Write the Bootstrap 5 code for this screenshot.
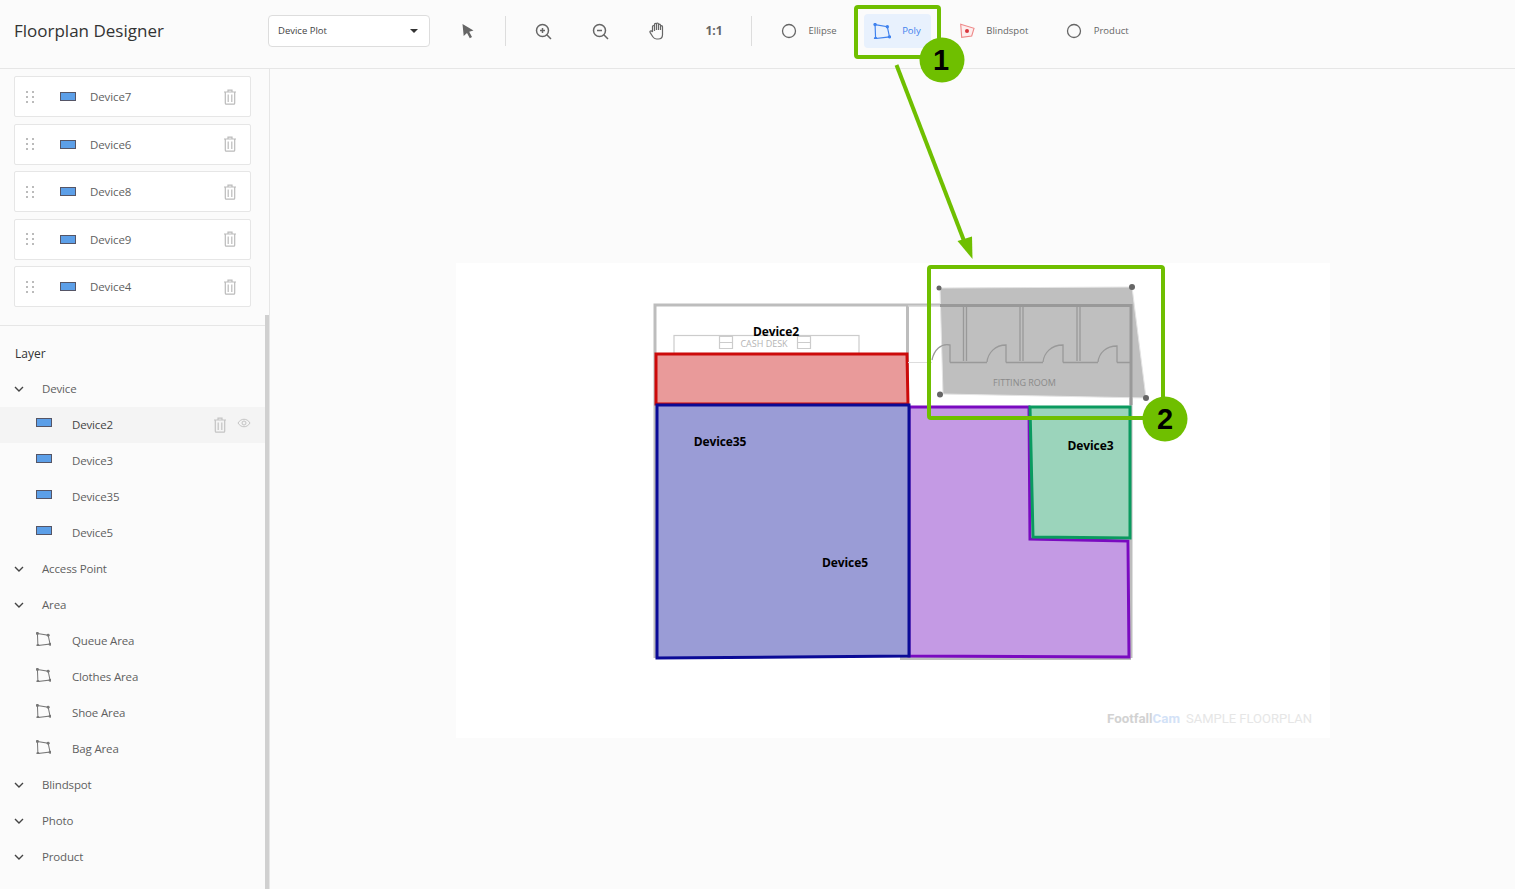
<!DOCTYPE html>
<html lang="en">
<head>
  <meta charset="UTF-8">
  <meta name="viewport" content="width=device-width, initial-scale=1">
  <title>Floorplan Designer</title>
  <link rel="stylesheet" href="https://cdn.jsdelivr.net/npm/bootstrap@5.3.0/dist/css/bootstrap.min.css">
  <script src="https://cdn.jsdelivr.net/npm/bootstrap@5.3.0/dist/js/bootstrap.bundle.min.js"></script>
  <style>
    body {
      background-color: #fbfbfb;
      font-family: "Open Sans", "Noto Sans", sans-serif;
      color: #5f5f5f;
      font-size: 11.5px;
      height: 889px;
    }
    .top-bar { height: 69px; padding-bottom: 6px; border-bottom: 1px solid #e6e6e6; }
    .app-title { width: 268px; padding-left: 14px; font-size: 17px; color: #333; white-space: nowrap; }
    .plot-select {
      width: 162px; height: 32px; font-size: 9.5px; color: #444; background: #fff;
      border: 1px solid #ddd; border-radius: 4px; padding: 0 11px 0 9px;
    }
    .plot-select::after { border-top: 4px solid #333; border-left: 4px solid transparent; border-right: 4px solid transparent; border-bottom: 0; margin: 0; }
    .tool-btn { width: 57px; height: 34px; font-weight: 700; font-size: 12px; color: #666; }
    .tool-first { margin-left: 9px; }
    .tool-sep { width: 1px; height: 30px; background: #ddd; margin: 0 9px 0 8.500px; }
    .tool-sep.is-last { margin: 0 0 0 8.500px; }
    .shape-group { gap: 17px; margin-left: 18px; }
    .shape-btn { height: 34px; padding: 0 10px; gap: 10.5px; font-size: 9.5px; border-radius: 4px; color: #666; }
    .shape-btn.is-active { background: #e8f1fd; color: #3f82ee; }
    .shape-btn.is-active svg { margin: 0 1px 0 -1px; }
    .side-panel { width: 270px; padding-top: 7.49px; border-right: 1px solid #e6e6e6; }
    .device-card {
      height: 41px; margin: 0 0 6.5px 14px; width: 237px; border: 1px solid #e6e6e6; border-radius: 2px;
      background: #fff; font-size: 11.5px; color: #5f5f5f; letter-spacing: -.1px;
    }
    .device-card .drag-dots { margin-left: 11px; }
    .device-card .dev-icon { margin-left: 26px; }
    .device-card .dev-name { margin-left: 14px; }
    .device-card .bin-icon { margin-right: 13px; }
    .panel-rule { border-top: 1px solid #e6e6e6; margin-top: 17.51px; }
    .layer-head { height: 36px; margin-top: 9px; padding: 2px 0 0 15px; color: #333; font-size: 12px; }
    .tree-row { height: 36px; width: 265px; font-size: 11.5px; letter-spacing: -.15px; }
    .tree-group { padding-left: 14px; }
    .tree-group span { margin-left: 18px; }
    .tree-item { padding-left: 36px; }
    .tree-item span { margin-left: 20px; }
    .tree-item.is-poly span { margin-left: 21px; }
    .tree-item.is-selected { background: #f4f4f4; color: #444; }
    .scroll-thumb { position: absolute; left: 265px; top: 315px; width: 4px; height: 574px; background: #d0d0d0; }
    .canvas-area { padding-top: 194px; }
    .plan-sheet { display: block; background: #fff; }
    .plan-label { font-family: "Open Sans", sans-serif; font-size: 12px; font-weight: 700; fill: #000; text-anchor: middle; letter-spacing: -.1px; }
    .plan-small { font-family: "Open Sans", sans-serif; font-size: 9px; fill: #b4b4b4; text-anchor: middle; }
    .note-layer { position: absolute; left: 0; top: 0; pointer-events: none; }
    .note-num { font-family: "Liberation Sans", sans-serif; font-size: 29px; font-weight: 700; fill: #000; text-anchor: middle; }
  </style>
</head>
<body class="position-relative overflow-hidden">
  <svg width="0" height="0" class="position-absolute">
    <symbol id="ic-trash" viewBox="0 0 14 16"><path d="M1 3h12M5 3V1.2h4V3M2.3 3v11.3c0 .5.4.9.9.9h7.6c.5 0 .9-.4.9-.9V3M5.2 5.5v7.5M8.8 5.5v7.5" fill="none" stroke="currentColor" stroke-width="1.2"/></symbol>
    <symbol id="ic-dots" viewBox="0 0 8 12"><g fill="#bbb"><rect x="0" y="0" width="2" height="2"/><rect x="6" y="0" width="2" height="2"/><rect x="0" y="5" width="2" height="2"/><rect x="6" y="5" width="2" height="2"/><rect x="0" y="10" width="2" height="2"/><rect x="6" y="10" width="2" height="2"/></g></symbol>
    <symbol id="ic-device" viewBox="0 0 16 9"><rect x=".5" y=".5" width="15" height="8" fill="#5c9fe8" stroke="#556"/></symbol>
    <symbol id="ic-chev" viewBox="0 0 10 6"><path d="M1 1l4 4 4-4" fill="none" stroke="#444" stroke-width="1.4"/></symbol>
    <symbol id="ic-poly" viewBox="0 0 16 15"><path d="M1.500 1.500L13 3.500L15 13L2 14.500z" fill="none" stroke="currentColor" stroke-width="1.100"/><g fill="currentColor"><circle cx="1.500" cy="1.500" r="1.600"/><circle cx="13" cy="3.500" r="1.600"/><circle cx="15" cy="13" r="1.600"/><circle cx="2" cy="14.500" r="1.600"/></g></symbol>
  </svg>

  <header class="top-bar d-flex align-items-center">
    <div class="app-title">Floorplan Designer</div>
    <button type="button" class="plot-select dropdown-toggle d-flex align-items-center justify-content-between">Device Plot</button>
    <div class="tool-btn tool-first d-flex align-items-center justify-content-center">
      <svg width="14" height="17" viewBox="0 0 14 17"><path d="M1.500 1l11 6.500-4.300 1.300 2.800 5.200-2.200 1.200-2.800-5.300-3.300 3z" fill="#666"/></svg>
    </div>
    <div class="tool-sep"></div>
    <div class="tool-btn d-flex align-items-center justify-content-center">
      <svg width="17" height="17" viewBox="0 0 17 17" fill="none" stroke="#666" stroke-width="1.500"><circle cx="7.500" cy="7.500" r="6"/><path d="M11.800 11.800L16 16M7.500 5v5M5 7.500h5"/></svg>
    </div>
    <div class="tool-btn d-flex align-items-center justify-content-center">
      <svg width="17" height="17" viewBox="0 0 17 17" fill="none" stroke="#666" stroke-width="1.500"><circle cx="7.500" cy="7.500" r="6"/><path d="M11.800 11.800L16 16M5 7.500h5"/></svg>
    </div>
    <div class="tool-btn d-flex align-items-center justify-content-center">
      <svg width="16" height="18" viewBox="0 0 16 18" fill="none" stroke="#666" stroke-width="1.200"><path d="M3.500 10V4.500a1 1 0 0 1 2 0V9M5.500 8V2.300a1 1 0 0 1 2 0V8M7.500 8V2a1 1 0 0 1 2 0v6M9.500 8V3.200a1 1 0 0 1 2 0V8M11.500 8V4.700a1 1 0 0 1 2 0v8c0 2.500-1.800 4.300-4.300 4.300H7.500c-1.800 0-2.800-.8-3.700-2.200L1.200 10.600c-.8-1.300.9-2.400 1.800-1.200l.5.6"/></svg>
    </div>
    <div class="tool-btn d-flex align-items-center justify-content-center">1:1</div>
    <div class="tool-sep is-last"></div>
    <div class="shape-group d-flex align-items-center flex-grow-1">
      <div class="shape-btn d-flex align-items-center">
        <svg width="18" height="16" viewBox="0 0 18 16" fill="none" stroke="#666" stroke-width="1.300"><circle cx="9" cy="8" r="6.500"/></svg>
        Ellipse
      </div>
      <div class="shape-btn is-active d-flex align-items-center">
        <svg width="18" height="16"><use href="#ic-poly"/></svg>
        Poly
      </div>
      <div class="shape-btn d-flex align-items-center">
        <svg width="18" height="16" viewBox="0 0 18 16"><path d="M2.700 1.300L16 5.300L13.700 13L3.700 14.300z" fill="#fdeeee" stroke="#e88" stroke-width="1.100"/><circle cx="9" cy="8" r="2" fill="#d9363e"/></svg>
        Blindspot
      </div>
      <div class="shape-btn d-flex align-items-center">
        <svg width="18" height="16" viewBox="0 0 18 16" fill="none" stroke="#666" stroke-width="1.300"><circle cx="9" cy="8" r="6.500"/></svg>
        Product
      </div>
    </div>
  </header>

  <div class="d-flex" style="height:820px">
    <aside class="side-panel flex-shrink-0">
      <div id="deviceCards"></div>
      <div class="panel-rule"></div>
      <div class="layer-head d-flex align-items-center">Layer</div>
      <div id="layerTree"></div>
    </aside>
    <main class="canvas-area flex-grow-1 d-flex justify-content-center align-items-start">
      <svg class="plan-sheet" width="874" height="475" viewBox="456 263 874 475">
        <!-- walls -->
        <g fill="none" stroke="#bdbdbd" stroke-width="3">
          <path d="M655 658V305H1131V658M900 658.500H1131M907.500 305V405"/>
        </g>
        <g fill="none" stroke="#ccc" stroke-width="1.200">
          <rect x="674" y="335.500" width="185" height="18"/>
          <path d="M719.500 336.500h13v12h-13zM719.500 342.500h13M797.500 336.500h13v12h-13zM797.500 342.500h13"/>
        </g>
        <text class="plan-small" x="764" y="347" fill="#bbb">CASH DESK</text>

        <!-- coloured zones -->
        <polygon points="656,354 907,354 908,404 656,404" fill="#e99a9a" stroke="#cc0a0a" stroke-width="3"/>
        <polygon points="909,407 1029,407 1030,539 1128,541 1129,657 909,656" fill="#c49ae4" stroke="#7a0ac0" stroke-width="3"/>
        <polygon points="657,405 909,405 909,656 657,658" fill="#9a9cd6" stroke="#0a0a96" stroke-width="3"/>
        <polygon points="1030,407 1130,407 1130,538 1033,537" fill="#9bd4bb" stroke="#0a9a5f" stroke-width="3"/>

        <!-- fitting room under the selected poly -->
        <polygon points="940,288 1132,287 1146,398 943,394" fill="#bfbfbf" stroke="#e4e4e4"/>
        <g fill="none" stroke="#999" stroke-width="1.300">
          <path d="M940 305.500H1131V405" stroke-width="3"/>
          <path d="M963.500 306V361M966.500 306V361M1020 306V361M1023 306V361M1077 306V361M1080 306V361"/>
          <path d="M950 362.500V345c-9-2-16 5-18 15M950 362.500H987M987 362c1-9 8-17 19-17V362.500M1006 362.500H1043M1043 362c1-9 8-17 20-17V362.500M1063 362.500H1098M1098 362c1-9 8-16 19-16V362.500M1117 362.500H1130"/>
        </g>
        <path d="M908 362.500H932M908 306H940" stroke="#ddd" stroke-width="1.200" fill="none"/>
        <text class="plan-small" x="1024.500" y="386" style="fill:#8a8a8a">FITTING ROOM</text>
        <g fill="#666">
          <circle cx="939" cy="288" r="2.500"/>
          <circle cx="1132" cy="287" r="3"/>
          <circle cx="940" cy="394.500" r="3"/>
          <circle cx="1146" cy="398" r="3"/>
        </g>

        <text class="plan-label" x="776" y="336">Device2</text>
        <text class="plan-label" x="720" y="446">Device35</text>
        <text class="plan-label" x="845" y="567">Device5</text>
        <text class="plan-label" x="1090.500" y="450">Device3</text>

        <text x="1107" y="723" font-family="Roboto, sans-serif" font-size="13.300" font-weight="700" fill="#d2d2d2">Footfall<tspan fill="#d3e2f7">Cam</tspan><tspan dx="6" font-size="13" font-weight="400" fill="#e6e6e6">SAMPLE FLOORPLAN</tspan></text>
      </svg>
    </main>
  </div>

  <div class="scroll-thumb"></div>

  <!-- callouts drawn over the screenshot -->
  <svg class="note-layer" width="1515" height="889" viewBox="0 0 1515 889">
    <g fill="none" stroke="#6fbf00" stroke-width="4" stroke-linejoin="round">
      <rect x="856" y="7" width="83" height="50" rx="2"/>
      <rect x="929" y="267" width="234" height="151" rx="2"/>
      <path d="M896.500 65L966 246"/>
    </g>
    <polygon points="972.500,259 957.500,241 972,236.500" fill="#6fbf00"/>
    <circle cx="942" cy="60" r="22.500" fill="#6fbf00"/>
    <circle cx="1165" cy="419" r="22.500" fill="#6fbf00"/>
    <text class="note-num" x="941" y="70">1</text>
    <text class="note-num" x="1165" y="429">2</text>
  </svg>

  <script>
    const cards = ["Device7", "Device6", "Device8", "Device9", "Device4"];
    document.getElementById("deviceCards").innerHTML = cards.map(name => `
      <div class="device-card d-flex align-items-center">
        <svg class="drag-dots" width="8" height="12"><use href="#ic-dots"/></svg>
        <svg class="dev-icon" width="16" height="9"><use href="#ic-device"/></svg>
        <span class="dev-name">${name}</span>
        <svg class="bin-icon ms-auto" width="14" height="16" style="color:#bbb"><use href="#ic-trash"/></svg>
      </div>`).join("");

    const tree = [
      ["g", "Device"], ["d", "Device2", true], ["d", "Device3"], ["d", "Device35"], ["d", "Device5"],
      ["g", "Access Point"], ["g", "Area"],
      ["p", "Queue Area"], ["p", "Clothes Area"], ["p", "Shoe Area"], ["p", "Bag Area"],
      ["g", "Blindspot"], ["g", "Photo"], ["g", "Product"]
    ];
    document.getElementById("layerTree").innerHTML = tree.map(([kind, name, selected]) => {
      if (kind === "g") {
        return `<div class="tree-row tree-group d-flex align-items-center">
          <svg width="10" height="6"><use href="#ic-chev"/></svg><span>${name}</span></div>`;
      }
      const icon = kind === "d"
        ? `<svg width="16" height="9" class="mb-1"><use href="#ic-device"/></svg>`
        : `<svg width="15" height="14" class="mb-1" style="color:#777"><use href="#ic-poly"/></svg>`;
      const extra = selected ? `
        <svg class="ms-auto" width="14" height="16" style="color:#c4c4c4"><use href="#ic-trash"/></svg>
        <svg class="mb-1" width="14" height="10" viewBox="0 0 14 10" fill="none" stroke="#c4c4c4" style="margin:0 14px 0 10px"><path d="M1 5c3-5 9-5 12 0-3 5-9 5-12 0z"/><circle cx="7" cy="5" r="2"/></svg>` : "";
      return `<div class="tree-row tree-item ${kind === "p" ? "is-poly" : ""} d-flex align-items-center ${selected ? "is-selected" : ""}">${icon}<span>${name}</span>${extra}</div>`;
    }).join("");
  </script>
</body>
</html>
